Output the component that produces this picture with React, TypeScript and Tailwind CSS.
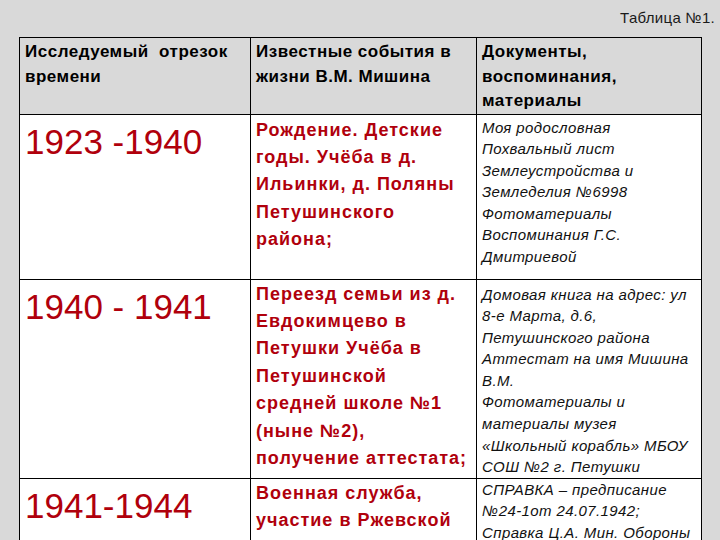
const RED = "text-[#b0000c]";

interface Row {
  period: string;
  events: string[];
  docs: string[];
  height: string;
  eventsPad: string;
  docsPad: string;
}

const rows: Row[] = [
  {
    period: "1923 -1940",
    events: ["Рождение. Детские", "годы. Учёба в д.", "Ильинки, д. Поляны", "Петушинского", "района;"],
    docs: [
      "Моя родословная",
      "Похвальный лист",
      "Землеустройства и",
      "Земледелия №6998",
      "Фотоматериалы",
      "Воспоминания Г.С.",
      "Дмитриевой",
    ],
    height: "h-[165px]",
    eventsPad: "pt-[2px]",
    docsPad: "pt-[2px]",
  },
  {
    period: "1940 - 1941",
    events: [
      "Переезд семьи из д.",
      "Евдокимцево в",
      "Петушки Учёба в",
      "Петушинской",
      "средней школе №1",
      "(ныне №2),",
      "получение аттестата;",
    ],
    docs: [
      "Домовая книга на адрес: ул",
      "8-е Марта, д.6,",
      "Петушинского района",
      "Аттестат на имя Мишина",
      "В.М.",
      "Фотоматериалы и",
      "материалы музея",
      "«Школьный корабль» МБОУ",
      "СОШ №2 г. Петушки",
    ],
    height: "h-[199px]",
    eventsPad: "pt-[1px]",
    docsPad: "pt-[4px]",
  },
  {
    period: "1941-1944",
    events: ["Военная служба,", "участие в Ржевской", "битве;"],
    docs: ["СПРАВКА – предписание", "№24-1от 24.07.1942;", "Справка Ц.А. Мин. Обороны"],
    height: "h-[90px]",
    eventsPad: "pt-[1px]",
    docsPad: "pt-0",
  },
];

export default function App() {
  return (
    <div className="h-[540px] w-[720px] overflow-hidden bg-[#d9d9d9] font-['Liberation_Sans',Arial,sans-serif]">
      {/* Caption */}
      <div className="flex h-[37px] items-start justify-end pr-[5px] pt-[9px] text-[15px] leading-[18px] tracking-[0.3px] text-[#1a1a1a]">
        Таблица №1.
      </div>

      <table className="ml-[19px] w-[682px] table-fixed border-collapse">
        <colgroup>
          <col className="w-[231px]" />
          <col className="w-[226px]" />
          <col className="w-[225px]" />
        </colgroup>
        <thead>
          <tr className="h-[75px] bg-[#d9d9d9] text-[17px] font-bold leading-[24.5px] tracking-[0.5px] text-black">
            <th className="border-[1.5px] border-black px-[5px] pt-[2px] text-left align-top font-bold">
              Исследуемый&nbsp; отрезок
              <br />
              времени
            </th>
            <th className="border-[1.5px] border-black px-[5px] pt-[2px] text-left align-top font-bold">
              Известные события в
              <br />
              жизни В.М. Мишина
            </th>
            <th className="border-[1.5px] border-black px-[5px] pt-[2px] text-left align-top font-bold">
              Документы,
              <br />
              воспоминания,
              <br />
              материалы
            </th>
          </tr>
        </thead>
        <tbody>
          {rows.map((r) => (
            <tr key={r.period} className={`${r.height} bg-white`}>
              <td className="border-[1.5px] border-black px-[5px] pt-[7px] align-top">
                <div className={`text-[35px] leading-[40px] ${RED}`}>{r.period}</div>
              </td>
              <td className={`border-[1.5px] border-black px-[5px] align-top ${r.eventsPad}`}>
                {r.events.map((line) => (
                  <div
                    key={line}
                    className={`whitespace-nowrap text-[18px] font-bold leading-[27.4px] tracking-[1px] ${RED}`}
                  >
                    {line}
                  </div>
                ))}
              </td>
              <td className={`border-[1.5px] border-black px-[5px] align-top ${r.docsPad}`}>
                {r.docs.map((line) => (
                  <div
                    key={line}
                    className="whitespace-nowrap text-[15px] italic leading-[21.6px] tracking-[0.4px] text-[#111]"
                  >
                    {line}
                  </div>
                ))}
              </td>
            </tr>
          ))}
        </tbody>
      </table>
    </div>
  );
}
